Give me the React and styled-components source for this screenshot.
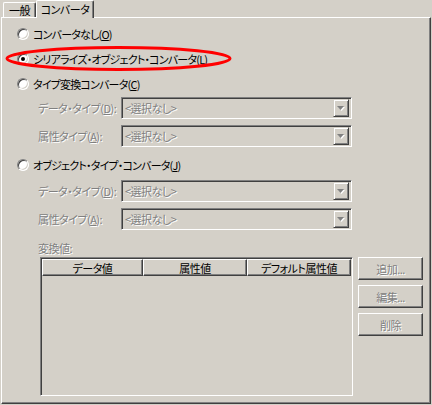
import React from 'react';
import styled, { createGlobalStyle } from 'styled-components';

// Classic Windows 2000 palette
const FACE = '#d4d0c8';
const SHADOW = '#808080';
const DARK = '#404040';

const GlobalStyle = createGlobalStyle`
  html, body {
    margin: 0;
    padding: 0;
    background: ${FACE};
  }
`;

const Dialog = styled.div`
  position: relative;
  width: 432px;
  height: 405px;
  background: ${FACE};
  color: #000;
  font-family: "Noto Sans CJK JP", "Noto Sans", sans-serif;
  font-size: 11px;
  font-feature-settings: "palt";
  letter-spacing: -0.5px;
  line-height: 14px;
  white-space: nowrap;
  overflow: hidden;
`;

const TabStrip = styled.div`
  position: relative;
  z-index: 1;
  display: flex;
  align-items: flex-end;
  height: 17px;
  padding-left: 3px;
`;

const Tab = styled.div`
  box-sizing: border-box;
  display: flex;
  align-items: center;
  justify-content: center;
  width: ${p => (p.active ? 58 : 33)}px;
  height: ${p => (p.active ? 18 : 15)}px;
  margin-bottom: ${p => (p.active ? -1 : 0)}px;
  background: ${FACE};
  border-left: 1px solid #fff;
  border-top: 1px solid #fff;
  border-right: 1px solid ${DARK};
  border-radius: 2px 2px 0 0;
  box-shadow: inset -1px 0 0 ${SHADOW};
  padding-bottom: ${p => (p.active ? 2 : 0)}px;
`;

const Panel = styled.div`
  box-sizing: border-box;
  display: flex;
  flex-direction: column;
  width: 430px;
  height: 387px;
  margin-left: 1px;
  border-top: 1px solid #fff;
  border-left: 1px solid #fff;
  border-right: 1px solid ${DARK};
  border-bottom: 1px solid ${DARK};
  box-shadow: inset -1px -1px 0 ${SHADOW};
`;

const RadioRow = styled.label`
  display: flex;
  align-items: center;
  gap: 4px;
  height: 20px;
  margin-top: ${p => p.top}px;
  padding-left: 15px;
  letter-spacing: -0.8px;
`;

const RadioMark = styled.span`
  position: relative;
  box-sizing: border-box;
  width: 12px;
  height: 12px;
  border-radius: 50%;
  background: #fff;
  border: 1px solid;
  border-color: ${SHADOW} #fff #fff ${SHADOW};
  box-shadow: inset 1px 1px 0 ${DARK}, inset -1px -1px 0 ${FACE};

  ${p => p.checked && `
    &::after {
      content: '';
      position: absolute;
      left: 3px;
      top: 3px;
      width: 4px;
      height: 4px;
      border-radius: 50%;
      background: #000;
    }
  `}
`;

const Disabled = styled.span`
  color: ${SHADOW};
  text-shadow: 1px 1px 0 #fff;
`;

const FieldRow = styled.div`
  display: flex;
  align-items: center;
  height: 22px;
  margin-top: ${p => p.top}px;
  padding-left: 36px;
`;

const FieldLabel = styled(Disabled)`
  width: 83px;
  flex-shrink: 0;
`;

const Combo = styled.div`
  box-sizing: border-box;
  display: flex;
  align-items: center;
  width: 231px;
  height: 22px;
  padding: 2px;
  border: 1px solid;
  border-color: ${SHADOW} #fff #fff ${SHADOW};
  box-shadow: inset 1px 1px 0 ${DARK}, inset -1px -1px 0 ${FACE};
`;

const ComboText = styled(Disabled)`
  flex: 1;
  padding-left: 1px;
`;

const ComboButton = styled.div`
  box-sizing: border-box;
  display: flex;
  align-items: center;
  justify-content: center;
  width: 16px;
  height: 18px;
  border: 1px solid;
  border-color: ${FACE} ${DARK} ${DARK} ${FACE};
  box-shadow: inset 1px 1px 0 #fff, inset -1px -1px 0 ${SHADOW};
`;

const SectionLabel = styled(Disabled)`
  display: block;
  height: 16px;
  line-height: 16px;
  margin-top: 10px;
  padding-left: 36px;
`;

const ListArea = styled.div`
  display: flex;
  gap: 5px;
  margin-top: 1px;
  padding-left: 38px;
`;

const Table = styled.div`
  box-sizing: border-box;
  width: 313px;
  height: 139px;
  border: 1px solid;
  border-color: ${SHADOW} #fff #fff ${SHADOW};
  box-shadow: inset 1px 1px 0 ${DARK}, inset -1px -1px 0 ${FACE};
  padding: 1px;
`;

const HeaderRow = styled.div`
  display: flex;
  height: 17px;
`;

const HeaderCell = styled.div`
  box-sizing: border-box;
  display: flex;
  align-items: center;
  justify-content: center;
  width: ${p => p.w}px;
  border: 1px solid;
  border-color: #fff ${DARK} ${DARK} #fff;
  box-shadow: inset -1px -1px 0 ${SHADOW};
`;

const ButtonColumn = styled.div`
  display: flex;
  flex-direction: column;
  gap: 5px;
`;

const Button = styled.div`
  box-sizing: border-box;
  display: flex;
  align-items: center;
  justify-content: center;
  width: 65px;
  height: 23px;
  border: 1px solid;
  border-color: #fff ${DARK} ${DARK} #fff;
  box-shadow: inset -1px -1px 0 ${SHADOW};
`;

// Red hand-drawn style highlight around the selected option
const Highlight = styled.svg`
  position: absolute;
  left: 0;
  top: 0;
  pointer-events: none;
`;

const Arrow = () => (
  <svg width="8" height="5" viewBox="0 0 8 5">
    <polygon points="1,1 8,1 4.5,5" fill="#fff" />
    <polygon points="0,0 7,0 3.5,4" fill={SHADOW} />
  </svg>
);

const Radio = ({ top, checked, children }) => (
  <RadioRow top={top}>
    <RadioMark checked={checked} />
    <span>{children}</span>
  </RadioRow>
);

const Field = ({ top, label, mnemonic }) => (
  <FieldRow top={top}>
    <FieldLabel>
      {label}(<u>{mnemonic}</u>):
    </FieldLabel>
    <Combo>
      <ComboText>&lt;選択なし&gt;</ComboText>
      <ComboButton>
        <Arrow />
      </ComboButton>
    </Combo>
  </FieldRow>
);

export default function App() {
  return (
    <Dialog>
      <GlobalStyle />
      <TabStrip>
        <Tab>一般</Tab>
        <Tab active>コンバータ</Tab>
      </TabStrip>
      <Panel>
        <Radio top={6}>コンバータなし(<u>O</u>)</Radio>
        <Radio top={5} checked>シリアライズ・オブジェクト・コンバータ(<u>L</u>)</Radio>
        <Radio top={5}>タイプ変換コンバータ(<u>C</u>)</Radio>
        <Field top={3} label="データ・タイプ" mnemonic="D" />
        <Field top={6} label="属性タイプ" mnemonic="A" />
        <Radio top={8}>オブジェクト・タイプ・コンバータ(<u>J</u>)</Radio>
        <Field top={5} label="データ・タイプ" mnemonic="D" />
        <Field top={6} label="属性タイプ" mnemonic="A" />
        <SectionLabel>変換値:</SectionLabel>
        <ListArea>
          <Table>
            <HeaderRow>
              <HeaderCell w={101}>データ値</HeaderCell>
              <HeaderCell w={104}>属性値</HeaderCell>
              <HeaderCell w={104}>デフォルト属性値</HeaderCell>
            </HeaderRow>
          </Table>
          <ButtonColumn>
            <Button><Disabled>追加...</Disabled></Button>
            <Button><Disabled>編集...</Disabled></Button>
            <Button><Disabled>削除</Disabled></Button>
          </ButtonColumn>
        </ListArea>
      </Panel>
      <Highlight width="432" height="405">
        <ellipse cx="118.5" cy="58.5" rx="111.5" ry="11" fill="none" stroke="#ff0000" strokeWidth="3" />
      </Highlight>
    </Dialog>
  );
}
